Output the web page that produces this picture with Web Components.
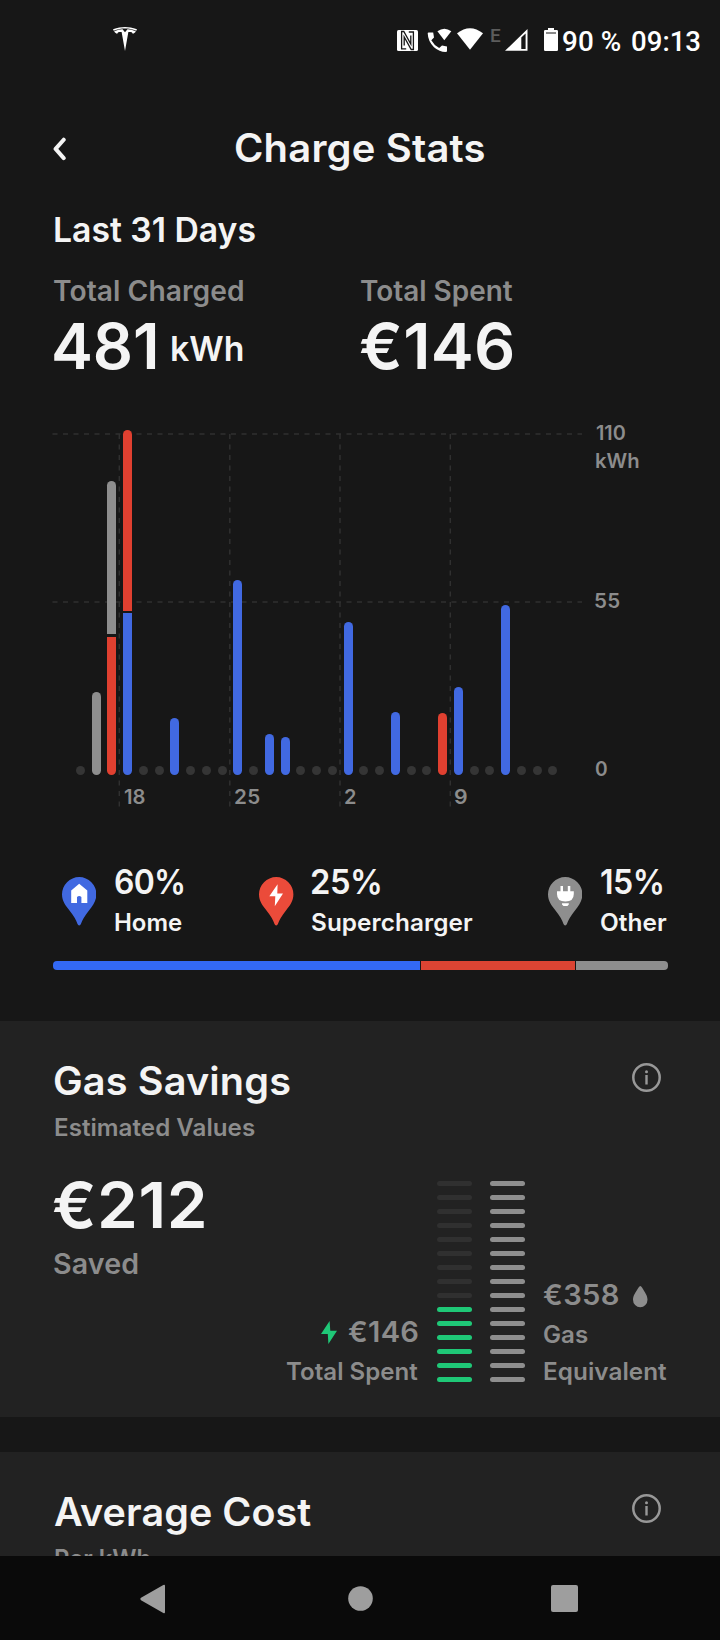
<!DOCTYPE html>
<html lang="en">
<head>
<meta charset="utf-8">
<title>Charge Stats</title>
<style>
html,body{margin:0;padding:0;background:#171717}
body{width:720px;height:1640px;overflow:hidden;font-family:Inter,"Liberation Sans",sans-serif;color:#f4f4f4}
</style>
</head>
<body>
<charge-app></charge-app>
<script>
const ctx = document.createElement('canvas').getContext('2d');

class Base extends HTMLElement {
  constructor() { super(); this.attachShadow({ mode: 'open' }); }
  connectedCallback() {
    if (this.ready) return;
    this.ready = true;
    const t = document.createElement('template');
    t.innerHTML = `<style>:host{display:block;box-sizing:border-box}svg{display:block}</style>` + this.render();
    this.shadowRoot.append(t.content.cloneNode(true));
    this.after && this.after();
  }
}
const define = (name, cls) => customElements.define(name, cls);

/* Text whose box is its visible extent: cap height tall, `ink` pixels wide.
   The difference to the natural width is shared between tracking and stretch. */
define('ui-text', class extends Base {
  render() {
    const s = this.getAttribute('size'), w = this.getAttribute('weight') || 560;
    const f = this.getAttribute('font') || 'Inter';
    return `<style>:host{font:${w} ${s}px/.727 ${f},"Liberation Sans",sans-serif;white-space:nowrap;height:.727em;flex:none}
      span{display:inline-block;vertical-align:top;transform-origin:0 0}</style><span><slot></slot></span>`;
  }
  after() {
    const ink = +this.getAttribute('ink'), txt = this.textContent;
    ctx.font = `${this.getAttribute('weight') || 560} ${this.getAttribute('size')}px ${this.getAttribute('font') || 'Inter'}`;
    const m = ctx.measureText(txt), nat = m.actualBoundingBoxLeft + m.actualBoundingBoxRight;
    const span = this.shadowRoot.querySelector('span');
    const track = txt.length > 1 ? (ink - nat) * .25 : 0;
    const k = ink / (nat + track);
    if (track) span.style.letterSpacing = track / (txt.length - 1) + 'px';
    span.style.transform = `scaleX(${k})`;
    span.style.marginLeft = m.actualBoundingBoxLeft * k + 'px';
    this.style.width = ink + 'px';
  }
});

define('status-bar', class extends Base {
  render() {
    return `<style>:host{height:80px;padding:27px 0 0 112.5px;display:flex;align-items:flex-start;color:#fff}
      svg{flex:none}.e{color:#5c5c5c}</style>
    <svg width="24" height="24" viewBox="0 0 24 24" fill="#fff"><path d="M12 5.362l2.475-3.026s4.245.09 8.471 2.054c-1.082 1.636-3.231 2.438-3.231 2.438-.146-1.439-1.154-1.79-4.354-1.79L12 24 8.619 5.034c-3.18 0-4.188.354-4.335 1.792 0 0-2.146-.795-3.229-2.43C5.28 2.431 9.525 2.34 9.525 2.34L12 5.362zm0-3.899c3.415-.03 7.326.528 11.328 2.28.535-.968.672-1.395.672-1.395C19.625.612 15.528.015 12 0 8.472.015 4.375.61 0 2.349c0 0 .195.525.672 1.396C4.674 1.989 8.585 1.435 12 1.46z"/></svg>
    <svg style="margin:2.7px 0 0 260.5px" width="21" height="21" viewBox="0 0 21 21"><rect width="21" height="21" rx="1.6" fill="#fff"/><path d="M9.2 18.800H4.6V1.500H6.800L13.800 14V5.500M11.800 2H16.4V19.500H14.200L7.200 7V15.500" fill="none" stroke="#171717" stroke-width="1.300"/></svg>
    <svg style="margin:1px 0 0 8.5px" width="25" height="25" viewBox="0 0 25 25" fill="#fff"><path d="M1.5 4.5H6.2L7 9.6 4.3 12.3Q7 17.3 12.2 20L15 17.5 20 18.4V23.6Q19.500 24 18.500 24Q12.500 24 7 19.200Q1 13.500.7 5.300Q.8 4.500 1.500 4.500Z"/><path d="M10.400 3.300Q17.300-2 24.300 3.300L17.300 12.300Z"/></svg>
    <svg style="margin:1.300px 0 0 5.500px" width="26" height="22" viewBox="0 0 26 22" fill="#fff"><path d="M0 5.300Q13-5 26 5.300L13 21.700Z"/></svg>
    <ui-text class="e" style="margin:2px 0 0 8px" font="Roboto" weight="500" size="19" ink="10">E</ui-text>
    <svg style="margin:1.500px 0 0 3.500px" width="23" height="22" viewBox="0 0 23 22"><path d="M0 21.800L22.500 0V21.800ZM16.300 8.600V20H20.600V4.500Z" fill="#fff" fill-rule="evenodd"/></svg>
    <svg style="margin:1px 0 0 16.500px" width="14" height="23" viewBox="0 0 14 23" fill="#fff"><path d="M4 0H10V2H12.700Q14 2 14 3.300V21.700Q14 23 12.700 23H1.300Q0 23 0 21.700V3.300Q0 2 1.300 2H4Z"/><path d="M2 5H12" stroke="#171717" stroke-width="1"/></svg>
    <ui-text style="margin:4.700px 0 0 4.700px" font="Roboto" weight="500" size="27.500" ink="58">90 %</ui-text>
    <ui-text style="margin:4.700px 0 0 11.600px" font="Roboto" weight="500" size="27.500" ink="68.400">09:13</ui-text>`;
  }
});

define('title-bar', class extends Base {
  render() {
    return `<style>:host{height:138.300px;padding:53.500px 0 0 53px;display:flex;align-items:flex-start}
      svg{margin:3px 169.400px 0 0}</style>
    <svg width="13" height="24" viewBox="0 0 13 24"><path d="M10.700 2.700L2.600 11.900L10.700 21.100" fill="none" stroke="#f4f4f4" stroke-width="4" stroke-linecap="round" stroke-linejoin="round"/></svg>
    <ui-text size="39" weight="600" ink="249">Charge Stats</ui-text>`;
  }
});

define('period-totals', class extends Base {
  render() {
    return `<style>:host{height:211.700px;padding-left:54px}.g{color:#8c8c8c}
      .cols{display:grid;grid-template-columns:307px 1fr;margin-top:38.300px}
      .v{display:flex;margin-top:21.300px;gap:16px;align-items:flex-start}</style>
    <ui-text style="margin-left:1.400px" size="34" weight="600" ink="200.300">Last 31 Days</ui-text>
    <div class="cols">
      <div><ui-text class="g" size="28" ink="189">Total Charged</ui-text>
        <div class="v"><ui-text size="63.500" weight="600" ink="101.700">481</ui-text><ui-text style="margin-top:14px" size="33.500" ink="71">kWh</ui-text></div></div>
      <div><ui-text class="g" size="28" ink="151.700">Total Spent</ui-text>
        <div class="v"><ui-text style="margin-left:-.700px" size="63.500" weight="600" ink="152.700">€146</ui-text></div></div>
    </div>`;
  }
});

define('charge-chart', class extends Base {
  render() {
    const B = '#4169e1', R = '#e04030', G = '#8e8e8e';
    /* slot index -> segments from top to bottom: [colour, height] */
    const data = { 1: [[G, 83]], 2: [[G, 153.600], [R, 138]], 3: [[R, 180.700], [B, 161.700]], 6: [[B, 56.400]], 10: [[B, 194.400]],
      12: [[B, 40.700]], 13: [[B, 37.400]], 17: [[B, 152.200]], 20: [[B, 63]], 23: [[R, 61.700]], 24: [[B, 87.700]], 27: [[B, 169.900]] };
    let cols = '';
    for (let i = 0; i < 31; i++) {
      const segs = data[i];
      cols += '<div class="col">' + (segs ? segs.map(([c, h]) => `<b style="background:${c};height:${h}px"></b>`).join('') : '<i></i>') + '</div>';
    }
    const v = [119.300, 229.800, 340, 450.300].map(x => `<path d="M${x - 48} 4V378"/>`).join('');
    return `<style>:host{padding-left:48px;display:grid;grid-template:390px 1fr/547px 1fr;color:#8c8c8c}
      .grid,.bars,.days{grid-area:1/1}
      .bars{display:grid;grid-template-columns:repeat(31,15.756px);padding-left:24.500px;height:344.700px}
      .col{display:flex;flex-direction:column;justify-content:flex-end;align-items:center;gap:2.300px}
      b{width:9px;flex:none;display:block}b:first-child{border-radius:4.500px 4.500px 0 0}b:last-child{border-radius:0 0 4.500px 4.500px}
      b:only-child{border-radius:4.500px}
      i{width:9px;height:9px;border-radius:50%;background:#353535}
      .days{display:grid;grid-template-columns:110.600px 110.300px 110px 1fr;padding:360px 0 0 76px}
      .axis{padding-left:.500px}</style>
    <svg class="grid" width="536" height="380" stroke="#303030" stroke-width="1.500" fill="none" stroke-dasharray="5 5.500"><path d="M4.500 4H534M4.500 172H534"/>${v}</svg>
    <div class="bars">${cols}</div>
    <div class="days"><ui-text size="20" ink="20.700">18</ui-text><ui-text size="20" ink="24.500">25</ui-text><ui-text size="20" ink="11">2</ui-text><ui-text size="20" ink="11.700">9</ui-text></div>
    <div class="axis"><ui-text style="margin-top:-4px" size="20" ink="29.500">110</ui-text>
      <ui-text style="margin-top:13.500px" size="20" ink="42.500">kWh</ui-text>
      <ui-text style="margin-top:125.600px" size="20" ink="24.500">55</ui-text>
      <ui-text style="margin-top:153.300px" size="20" ink="11.500">0</ui-text></div>`;
  }
});

const PIN = 'M17.200 48.500Q16 48.500 15.400 46.800Q13.500 41 7.500 33.500C3.500 28.500 0 24 0 17.300A17.200 17.200 0 0 1 34.400 17.300C34.400 24 31 28.500 27 33.500Q21 41 19 46.800Q18.400 48.500 17.200 48.500Z';
const GLYPHS = {
  home: ['#4169e1', '<path d="M17.200 6.800L25.300 13.500V26H19.400V20Q17.200 17.800 15 20V26H9.200V13.500Z"/>'],
  bolt: ['#eb4b3a', '<path d="M18.600 7.200L10.300 19.300H16.300L15.800 29.200L24 16.500H18.300Z"/>'],
  plug: ['#8e8e8e', '<path d="M12.500 9H15V14.200H19.800V9H22.300V14.200H25.800V17Q25.800 24.600 17.400 24.600Q9 24.600 9 17V14.200H12.500ZM14 26.200H20.800V27.500L19.400 29H15.500L14 27.500Z"/>']
};
define('source-item', class extends Base {
  render() {
    const [c, g] = GLYPHS[this.getAttribute('kind')];
    const a = n => this.getAttribute(n);
    return `<style>:host{display:flex;align-items:flex-start}svg{margin:8px ${a('gap')}px 0 0;flex:none}</style>
    <svg width="34.400" height="49" viewBox="0 0 34.400 49"><path fill="${c}" d="${PIN}"/><g fill="#fff">${g}</g></svg>
    <div><ui-text style="margin-top:.800px" size="34" ink="${a('pink')}">${a('percent')}</ui-text>
      <ui-text style="margin-top:19px" size="24" ink="${a('nink')}">${a('name')}</ui-text></div>`;
  }
});

define('source-split', class extends Base {
  render() {
    return `<style>:host{padding:0 52px 0 53px}
      .row{display:grid;grid-template-columns:197.500px 288.600px 1fr;padding-left:8.700px;height:91.500px}
      .bar{display:grid;grid-template-columns:367px 153.500px 92px;gap:1.300px;height:8.700px}
      .bar b:first-child{background:#3369f4;border-radius:4px 0 0 4px}.bar b{background:#dc4433}
      .bar b:last-child{background:#8e8e8e;border-radius:0 4px 4px 0}</style>
    <div class="row">
      <source-item kind="home" gap="19.200" percent="60%" pink="68.300" name="Home" nink="67"></source-item>
      <source-item kind="bolt" gap="18.500" percent="25%" pink="68" name="Supercharger" nink="161"></source-item>
      <source-item kind="plug" gap="18.800" percent="15%" pink="61" name="Other" nink="66.200"></source-item>
    </div>
    <div class="bar"><b></b><b></b><b></b></div>`;
  }
});

define('stat-card', class extends Base {
  render() {
    const a = n => this.getAttribute(n);
    return `<style>:host{background:#222;overflow:hidden;padding:46.400px 0 0 54.500px}
      .head{display:grid;grid-template-columns:577.500px 30px;height:51.700px}
      .head svg{margin-top:-4.500px}.s{color:#8c8c8c}</style>
    <div class="head"><ui-text style="margin-left:-.300px" size="39" weight="600" ink="${a('hink')}">${a('heading')}</ui-text>
      <svg width="29" height="29" viewBox="0 0 29 29"><circle cx="14.500" cy="14.500" r="13.200" fill="none" stroke="#989898" stroke-width="2.500"/><path d="M14.500 12V21.500" stroke="#989898" stroke-width="2.400"/><circle cx="14.500" cy="8.800" r="1.500" fill="#989898"/></svg></div>
    <ui-text class="s" size="24" ink="${a('sink')}">${a('sub')}</ui-text>
    <slot></slot>`;
  }
});

define('gas-savings', class extends Base {
  render() {
    let ev = '', gas = '';
    for (let i = 0; i < 15; i++) { ev += `<i class="${i < 9 ? 'off' : 'on'}"></i>`; gas += '<i></i>'; }
    return `<style>:host{display:grid;grid-template-columns:231.500px 132.500px 35.500px 35.300px 125px;height:200px;margin-top:43.500px;color:#8c8c8c}
      .big{color:#f4f4f4}.ticks{display:grid;gap:8.700px;grid-auto-rows:5.300px;align-content:start;margin-top:1px;width:35.500px}
      i{background:#8e8e8e;border-radius:2.600px}.on{background:#1fc877}.off{background:#303030}
      .row{display:flex}</style>
    <div><ui-text class="big" style="margin:2.300px 0 0 -1px" size="63.500" weight="600" ink="151">€212</ui-text><ui-text style="margin-top:25.800px" size="28" ink="83.500">Saved</ui-text></div>
    <div>
      <div class="row" style="margin:141.600px 0 0 35px"><svg width="16" height="23" viewBox="0 0 16 23" style="margin:-1px 10.800px 0 0"><path fill="#1fc877" d="M8.600 0L0 13H6.800L7.400 23L16 9.800H9.300Z"/></svg><ui-text size="28" ink="70">€146</ui-text></div>
      <ui-text style="margin-top:19.500px" size="24" ink="132.300">Total Spent</ui-text>
    </div>
    <div class="ticks" style="margin-left:18.200px">${ev}</div>
    <div class="ticks" style="margin-left:35.700px">${gas}</div>
    <div style="margin-left:54px;width:125px">
      <div class="row" style="margin-top:105.300px"><ui-text size="28" ink="75.500">€358</ui-text><svg width="15" height="22" viewBox="0 0 15 22" style="margin:.500px 0 0 14.700px"><path fill="#8e8e8e" d="M7.300 0Q8.200 0 9 1.500C12 6.500 14.500 9.500 14.500 13.800A7.250 7.400 0 0 1 0 13.800C0 9.500 2.500 6.500 5.600 1.500Q6.400 0 7.300 0Z"/></svg></div>
      <ui-text style="margin:18.700px 0 0 .700px" size="24" ink="44">Gas</ui-text>
      <ui-text style="margin:19.200px 0 0 1px" size="24" ink="123.200">Equivalent</ui-text>
    </div>`;
  }
});

define('nav-bar', class extends Base {
  render() {
    return `<style>:host{height:84px;background:#0a0a0a;display:flex;align-items:center;padding:1.500px 0 0 140px}svg{flex:none}</style>
    <svg width="26" height="30" viewBox="0 0 26 30" fill="#9e9e9e"><path d="M25 2V28Q25 30 23.300 29L1 16.200Q-.300 15 1 13.800L23.300 1Q25 0 25 2Z"/></svg>
    <svg style="margin-left:182px" width="25" height="25"><circle cx="12.500" cy="12.500" r="12.300" fill="#9e9e9e"/></svg>
    <svg style="margin-left:178.200px" width="27" height="27"><rect width="27" height="27" rx="2" fill="#9e9e9e"/></svg>`;
  }
});

define('charge-app', class extends Base {
  render() {
    return `<style>:host{width:720px;height:1640px;display:flex;flex-direction:column;overflow:hidden}
      :host>*{flex:none}</style>
    <status-bar></status-bar><title-bar></title-bar><period-totals></period-totals>
    <charge-chart style="height:439.500px"></charge-chart>
    <source-split style="height:151.500px"></source-split>
    <stat-card style="height:396px" heading="Gas Savings" hink="235.500" sub="Estimated Values" sink="200"><gas-savings></gas-savings></stat-card>
    <stat-card style="height:104px;margin-top:35px" heading="Average Cost" hink="257.500" sub="Per kWh" sink="95.500"></stat-card>
    <nav-bar></nav-bar>`;
  }
});
</script>
</body>
</html>
